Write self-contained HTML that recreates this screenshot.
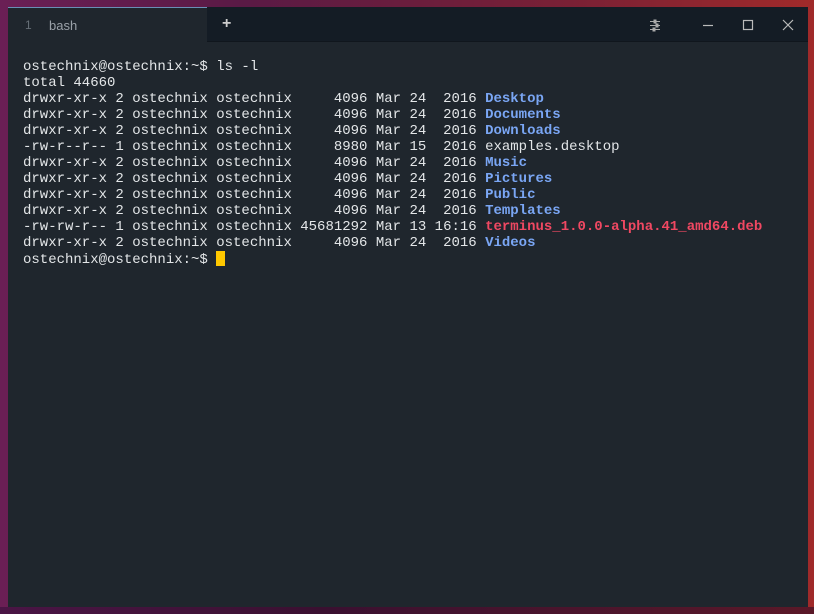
<!DOCTYPE html>
<html><head><style>
html,body{margin:0;padding:0;width:814px;height:614px;overflow:hidden}
body{background:linear-gradient(90deg,#6a1f55 0%,#5a1a45 30%,#7a2035 70%,#a02a2a 100%);position:relative}
.bot{position:absolute;left:0;right:0;bottom:0;height:7px;background:linear-gradient(90deg,#4a1545,#3a1030 40%,#5a1828 100%)}
.win{position:absolute;left:8px;top:7px;width:800px;height:600px;background:#1f262d}
.bar{position:absolute;left:0;top:0;width:800px;height:35px;background:#141c25;border-bottom:1px solid #10161d;box-sizing:border-box}
.tab{position:absolute;left:0;top:0;width:199px;height:36px;background:#1f262d;border-top:1px solid #6a8fb5;box-sizing:border-box}
.tab .n{position:absolute;left:17px;top:10px;font:12px "Liberation Sans",sans-serif;color:#666e76}
.tab .t{position:absolute;left:41px;top:10px;font:13px "Liberation Sans",sans-serif;color:#9aa1a8}
.plus{position:absolute;left:214px;top:8px;color:#ccc;font:bold 16px "Liberation Sans",sans-serif}
pre{position:absolute;left:15px;top:52px;margin:0;font:14px/16px "Liberation Mono",monospace;color:#e3e6e8}
.d{color:#7aa6f4;font-weight:bold}.r{color:#f04862;font-weight:bold}
.cur{display:inline-block;width:9px;height:15px;background:#ffc800;vertical-align:-3px}
</style></head><body>
<div class="bot"></div>
<div class="win">
<div class="bar">
<div class="tab"><span class="n">1</span><span class="t">bash</span></div>
<div class="plus">+</div>
<svg style="position:absolute;left:641px;top:11px" width="14" height="14" viewBox="0 0 14 14" stroke="#aaa" stroke-width="1"><path d="M1 3.5h10M1 7.5h10M1 11.5h10"/><rect x="5" y="2" width="2" height="3" fill="#aaa"/><rect x="7" y="6" width="2" height="3" fill="#aaa"/><rect x="4" y="10" width="2" height="3" fill="#aaa"/></svg>
<svg style="position:absolute;left:693px;top:11px" width="14" height="14" stroke="#bbb" stroke-width="1.2" fill="none"><path d="M2 7.5h10"/></svg>
<svg style="position:absolute;left:733px;top:11px" width="14" height="14" stroke="#bbb" stroke-width="1.2" fill="none"><rect x="2.5" y="2.5" width="9" height="9"/></svg>
<svg style="position:absolute;left:773px;top:11px" width="14" height="14" stroke="#bbb" stroke-width="1.2" fill="none"><path d="M2 2l10 10M12 2L2 12"/></svg>
</div>
<pre>ostechnix@ostechnix:~$ ls -l
total 44660
drwxr-xr-x 2 ostechnix ostechnix     4096 Mar 24  2016 <span class="d">Desktop</span>
drwxr-xr-x 2 ostechnix ostechnix     4096 Mar 24  2016 <span class="d">Documents</span>
drwxr-xr-x 2 ostechnix ostechnix     4096 Mar 24  2016 <span class="d">Downloads</span>
-rw-r--r-- 1 ostechnix ostechnix     8980 Mar 15  2016 examples.desktop
drwxr-xr-x 2 ostechnix ostechnix     4096 Mar 24  2016 <span class="d">Music</span>
drwxr-xr-x 2 ostechnix ostechnix     4096 Mar 24  2016 <span class="d">Pictures</span>
drwxr-xr-x 2 ostechnix ostechnix     4096 Mar 24  2016 <span class="d">Public</span>
drwxr-xr-x 2 ostechnix ostechnix     4096 Mar 24  2016 <span class="d">Templates</span>
-rw-rw-r-- 1 ostechnix ostechnix 45681292 Mar 13 16:16 <span class="r">terminus_1.0.0-alpha.41_amd64.deb</span>
drwxr-xr-x 2 ostechnix ostechnix     4096 Mar 24  2016 <span class="d">Videos</span>
ostechnix@ostechnix:~$ <span class="cur"></span></pre>
</div>
</body></html>
